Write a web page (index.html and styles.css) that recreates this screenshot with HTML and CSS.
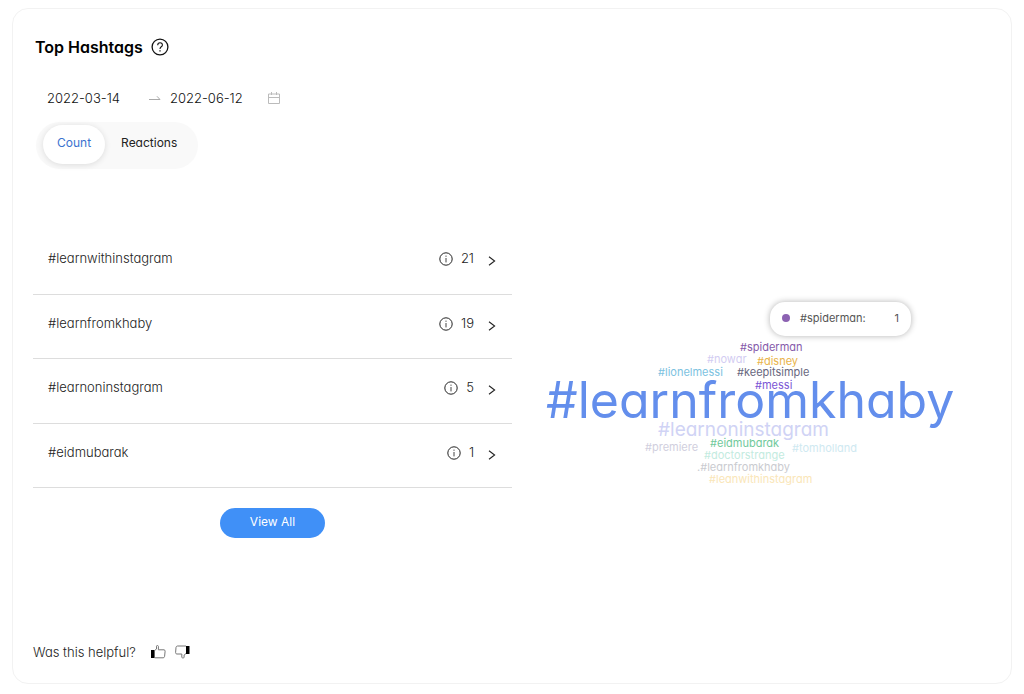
FILE: index.html
```html
<!DOCTYPE html>
<html lang="en">
<head>
<meta charset="utf-8">
<meta name="viewport" content="width=device-width, initial-scale=1">
<title>Top Hashtags</title>
<link rel="stylesheet" href="styles.css">
</head>
<body>
<svg class="defs" aria-hidden="true">
  <symbol id="info" viewBox="0 0 14 14"><circle cx="7" cy="7" r="6.2" fill="none" stroke="#222"/><path d="M7 6v4.4M7 3.6v1.2" stroke="#444" fill="none"/></symbol>
  <symbol id="chevron" viewBox="0 0 8 10"><path d="M1 .8 6.600 5 1 9.200" fill="none" stroke="#222" stroke-width="1.100"/></symbol>
</svg>
<main class="card">
  <header class="head">
    <h1 class="title">Top Hashtags</h1>
    <button class="icon-btn" aria-label="Help">
      <svg width="18" height="18" viewBox="0 0 18 18" fill="none" stroke="#111"><circle cx="9" cy="9" r="7.900" stroke-width="1.300"/><path d="M6.700 7.200c0-3.200 4.700-3.200 4.700-.3 0 1.900-2.400 1.800-2.400 4" stroke-width="1.100"/><path d="M9 12.200v1.300" stroke-width="1.300"/></svg>
    </button>
  </header>
  <div class="dates">
    <input class="date" type="text" aria-label="Start date" value="2022-03-14">
    <svg class="arrow" width="12" height="6" viewBox="0 0 12 6"><path d="M0 4.500h11L8 1.300" fill="none" stroke="#aaa"/></svg>
    <input class="date" type="text" aria-label="End date" value="2022-06-12">
    <svg class="calendar" width="12" height="12" viewBox="0 0 12 12" fill="none" stroke="#bbb"><path d="M.5 2h11v9.500H.5zM.5 5.500h11M3.500 0v3M8.500 0v3"/></svg>
  </div>
  <div class="tabs">
    <button class="tab tab-active">Count</button>
    <button class="tab">Reactions</button>
  </div>
  <div class="content">
    <section class="left">
      <ul class="list">
        <li class="row"><span class="name">#learnwithinstagram</span><svg class="info"><use href="#info"/></svg><span class="count">21</span><button class="icon-btn chevron" aria-label="Open #learnwithinstagram"><svg width="8" height="10"><use href="#chevron"/></svg></button></li>
        <li class="row"><span class="name">#learnfromkhaby</span><svg class="info"><use href="#info"/></svg><span class="count">19</span><button class="icon-btn chevron" aria-label="Open #learnfromkhaby"><svg width="8" height="10"><use href="#chevron"/></svg></button></li>
        <li class="row"><span class="name">#learnoninstagram</span><svg class="info"><use href="#info"/></svg><span class="count">5</span><button class="icon-btn chevron" aria-label="Open #learnoninstagram"><svg width="8" height="10"><use href="#chevron"/></svg></button></li>
        <li class="row"><span class="name">#eidmubarak</span><svg class="info"><use href="#info"/></svg><span class="count">1</span><button class="icon-btn chevron" aria-label="Open #eidmubarak"><svg width="8" height="10"><use href="#chevron"/></svg></button></li>
      </ul>
      <button class="view-all">View All</button>
    </section>
    <section class="cloud" aria-label="Hashtag cloud">
      <div class="canvas">
        <span class="tag t-main">#learnfromkhaby</span>
        <span class="tag t-second">#learnoninstagram</span>
        <span class="tag t-spiderman">#spiderman</span>
        <span class="tag t-nowar">#nowar</span>
        <span class="tag t-disney">#disney</span>
        <span class="tag t-lionel">#lionelmessi</span>
        <span class="tag t-keep">#keepitsimple</span>
        <span class="tag t-messi">#messi</span>
        <span class="tag t-premiere">#premiere</span>
        <span class="tag t-eid">#eidmubarak</span>
        <span class="tag t-tom">#tomholland</span>
        <span class="tag t-doctor">#doctorstrange</span>
        <span class="tag t-khaby">.#learnfromkhaby</span>
        <span class="tag t-lean">#leanwithinstagram</span>
        <div class="tooltip" role="tooltip"><span class="dot"></span><span class="tip-name">#spiderman:</span><span>1</span></div>
      </div>
    </section>
  </div>
  <footer class="foot">
    <span>Was this helpful?</span>
    <button class="icon-btn thumb" aria-label="Yes">
      <svg width="15" height="14" viewBox="0 0 15 14"><path d="M0 5h3.600v8H0z" fill="#000"/><path d="M3.600 5.500 5.500 4V1.200C5.500.2 7.200.2 7.400 1.300v3.500H13q1.200.2 1.100 1.400l-.5 5.200q-.2 1.300-1.400 1.400H3.600" fill="none" stroke="#777"/></svg>
    </button>
    <button class="icon-btn" aria-label="No">
      <svg width="15" height="14" viewBox="0 0 15 14"><path d="M11 1h3.500v8H11z" fill="#000"/><path d="M11 1H2.500Q1.200 1.200 1 2.400L.6 7.600Q.6 8.900 1.800 9h5v3.200c.3 1.200 2.100 1.200 2.300 0V10L11 8.500" fill="none" stroke="#777"/></svg>
    </button>
  </footer>
</main>
</body>
</html>
```
FILE: styles.css
```css
* { box-sizing: border-box; }
body {
  margin: 0;
  padding: 8px 12px 10px;
  background: #fff;
  color: #222;
  font: 300 13px/16px Inter, "Liberation Sans", sans-serif;
  font-feature-settings: "cv11";
}
button, input { font: inherit; font-feature-settings: inherit; color: inherit; border: 0; background: none; padding: 0; }
button { cursor: pointer; }
svg { display: block; flex: none; }
.defs { position: absolute; width: 0; height: 0; }
.card {
  display: flex;
  flex-direction: column;
  min-height: calc(100vh - 18px);
  padding-bottom: 23px;
  border: 1px solid #f2f2f2;
  border-radius: 16px;
}
.head { display: flex; align-items: center; gap: 8px; padding: 27px 22px 0; }
.title { margin: 0; color: #000; font-size: 16px; line-height: 22px; font-weight: 600; }
.dates { display: flex; align-items: center; padding: 32px 34px 0; }
.date { width: 102px; height: 16px; color: #111; }
.arrow { margin-right: 9px; }
.date + .calendar { margin-left: -4px; }
.tabs { display: flex; align-self: flex-start; margin: 16px 23px 0; padding: 3px 7px 5px; border-radius: 24px; background: #f9f9f9; }
.tab { height: 39px; padding: 0 14px 4px; border-radius: 20px; font-size: 12px; font-weight: 400; }
.tab-active { background: #fff; color: #3b72cf; box-shadow: 0 1px 6px rgba(0, 0, 0, .12); }
.tab + .tab { margin-left: 2px; }
.content { display: grid; grid-template-columns: 1fr 1fr; margin-top: 61px; }
.left { padding-left: 20px; display: flex; flex-direction: column; align-items: center; }
.list { display: grid; grid-auto-rows: 1fr; width: 100%; min-height: 258px; margin: 0; padding: 0; list-style: none; }
.row { display: flex; align-items: center; padding: 0 16px 7px 15px; border-bottom: 1px solid #ddd; }
.name { flex: 1; }
.info { width: 14px; height: 14px; margin-top: 2px; }
.count { margin: 0 14px 0 8px; }
.icon-btn { display: block; }
.chevron { margin-top: 6px; }
.view-all { width: 105px; height: 30px; margin-top: 20px; padding-bottom: 2px; border-radius: 15px; background: #4090f7; color: #fff; font-size: 12px; font-weight: 400; }
.cloud { display: flex; }
.canvas { position: relative; width: 499px; }
.tag { position: absolute; font-size: 11px; font-weight: 400; white-space: nowrap; }
.t-main { left: 34px; top: 142px; color: #638eec; font-size: 50px; line-height: 56px; }
.t-second { left: 146px; top: 188px; color: #d0d3f5; font-size: 19px; line-height: 24px; }
.t-spiderman { left: 228px; top: 109px; color: #865aaa; }
.t-nowar { left: 195px; top: 121px; color: #d3cdf2; }
.t-disney { left: 245px; top: 123px; color: #e9b44a; }
.t-lionel { left: 146px; top: 134px; color: #7cc2df; }
.t-keep { left: 225px; top: 134px; color: #68677e; }
.t-messi { left: 243px; top: 147px; color: #7b55d5; }
.t-premiere { left: 133px; top: 209px; color: #d1cfde; }
.t-eid { left: 198px; top: 205px; color: #70c99b; }
.t-tom { left: 280px; top: 210px; color: #cfe9f1; }
.t-doctor { left: 192px; top: 217px; color: #c3ebe0; }
.t-khaby { left: 185px; top: 229px; color: #cacbd0; }
.t-lean { left: 197px; top: 241px; color: #fae6b8; }
.tooltip {
  position: absolute;
  left: 258px;
  top: 72px;
  display: flex;
  align-items: center;
  width: 141px;
  height: 34px;
  padding: 0 12px 2px;
  border-radius: 15px;
  background: #fff;
  color: #555;
  font-size: 11px;
  font-weight: 400;
  box-shadow: 0 0 6px rgba(0, 0, 0, .3);
}
.dot { width: 8px; height: 8px; margin-right: 10px; border-radius: 50%; background: #8c62b2; }
.tip-name { flex: 1; }
.foot { display: flex; align-items: center; margin-top: auto; padding: 0 20px; }
.thumb { margin: 0 9px 0 15px; }
```
